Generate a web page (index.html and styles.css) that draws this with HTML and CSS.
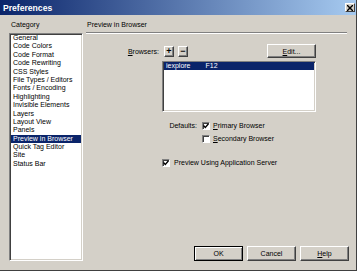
FILE: index.html
```html
<!DOCTYPE html>
<html lang="en">
<head>
    <meta charset="UTF-8">
    <title>Preferences</title>
    <link rel="stylesheet" href="styles.css">
</head>
<body>
    <div class="window">
        <div class="titlebar">
            <span class="title">Preferences</span>
            <span class="close">
                <svg width="6" height="6" viewBox="0 0 6 6"><path d="M0 0 L6 6 M6 0 L0 6" stroke="#000" stroke-width="1.4"/></svg>
            </span>
        </div>

        <div class="main">
            <!-- Category list -->
            <div class="left">
                <div class="label cat-label">Category</div>
                <ul class="listbox categories">
                    <li>General</li>
                    <li>Code Colors</li>
                    <li>Code Format</li>
                    <li>Code Rewriting</li>
                    <li>CSS Styles</li>
                    <li>File Types / Editors</li>
                    <li>Fonts / Encoding</li>
                    <li>Highlighting</li>
                    <li>Invisible Elements</li>
                    <li>Layers</li>
                    <li>Layout View</li>
                    <li>Panels</li>
                    <li class="selected">Preview in Browser</li>
                    <li>Quick Tag Editor</li>
                    <li>Site</li>
                    <li>Status Bar</li>
                </ul>
            </div>

            <!-- Panel -->
            <div class="right">
                <div class="label panel-title">Preview in Browser</div>
                <div class="groove"></div>

                <div class="browsers-row">
                    <span class="row-label browsers-label"><u>B</u>rowsers:</span>
                    <button class="btn small">+</button>
                    <button class="btn small minus">&minus;</button>
                    <button class="btn edit"><u>E</u>dit...</button>
                </div>

                <ul class="listbox browsers">
                    <li class="selected"><span>iexplore</span><span class="key">F12</span></li>
                </ul>

                <div class="check-row defaults">
                    <span class="row-label defaults-label">Defaults:</span>
                    <span class="checkbox checked"><svg width="6" height="6" viewBox="0 0 6 6"><path d="M0.5 2.5 L2.3 4.5 L5.5 0.8" stroke="#000" stroke-width="1.3" fill="none"/></svg></span>
                    <span class="check-text"><u>P</u>rimary Browser</span>
                </div>
                <div class="check-row secondary">
                    <span class="checkbox"></span>
                    <span class="check-text"><u>S</u>econdary Browser</span>
                </div>
                <div class="check-row app-server">
                    <span class="checkbox checked"><svg width="6" height="6" viewBox="0 0 6 6"><path d="M0.5 2.5 L2.3 4.5 L5.5 0.8" stroke="#000" stroke-width="1.3" fill="none"/></svg></span>
                    <span class="check-text">Preview Using Application Server</span>
                </div>

                <div class="buttons">
                    <button class="btn dlg default">OK</button>
                    <button class="btn dlg">Cancel</button>
                    <button class="btn dlg"><u>H</u>elp</button>
                </div>
            </div>
        </div>
    </div>
</body>
</html>
```

FILE: styles.css
```css
body {
    margin: 0;
    font-family: "Liberation Sans", Arial, sans-serif;
    font-size: 7px;
    color: #000;
}

.window {
    width: 357px;
    height: 271px;
    box-sizing: border-box;
    background-color: #d4d0c8;
    border-right: 1px solid #404040;
    border-bottom: 1px solid #404040;
    display: flex;
    flex-direction: column;
}

/* Title bar */
.titlebar {
    height: 15px;
    display: flex;
    align-items: center;
    background: linear-gradient(to right, #0a246a, #a6caf0);
    padding: 0 1px 0 3px;
}

.title {
    flex: 1;
    color: white;
    font-weight: bold;
    font-size: 8.6px;
}

.close {
    width: 10px;
    height: 9px;
    box-sizing: border-box;
    background-color: #d4d0c8;
    border: 1px solid;
    border-color: #fff #404040 #404040 #fff;
    display: flex;
    align-items: center;
    justify-content: center;
}

/* Main area */
.main {
    flex: 1;
    display: flex;
    gap: 3px;
    padding: 6px 7px 9px 9px;
    min-height: 0;
}

.label {
    height: 8px;
    line-height: 8px;
    white-space: nowrap;
}

.left {
    width: 74px;
    display: flex;
    flex-direction: column;
}

.cat-label {
    padding-left: 2px;
}

.listbox {
    list-style: none;
    margin: 0;
    padding: 0;
    background: white;
    border: 1px solid;
    border-color: #808080 #fff #fff #808080;
    box-shadow: inset 1px 1px 0 #404040, inset -1px -1px 0 #d4d0c8;
    box-sizing: border-box;
}

.categories {
    flex: 1;
    margin-top: 4px;
    padding: 0 1px 0 1px;
}

.categories li {
    height: 8.4px;
    line-height: 8.4px;
    padding-left: 2px;
    white-space: nowrap;
}

.listbox li.selected {
    background-color: #0a246a;
    color: white;
}

/* Panel */
.right {
    flex: 1;
    display: flex;
    flex-direction: column;
}

.panel-title {
    padding-left: 1px;
}

.groove {
    margin-top: 3px;
    margin-right: 2px;
    height: 1px;
    background-color: #808080;
    border-bottom: 1px solid #fff;
}

.row-label {
    text-align: right;
    flex-shrink: 0;
    white-space: nowrap;
}

.browsers-row {
    margin-top: 10px;
    width: 230px;
    height: 14px;
    display: flex;
    align-items: center;
}

.browsers-label {
    width: 73px;
}

.btn {
    font-family: inherit;
    font-size: 7px;
    color: #000;
    background-color: #d4d0c8;
    border: 1px solid;
    border-color: #fff #404040 #404040 #fff;
    box-shadow: inset -1px -1px 0 #808080;
    padding: 0;
    margin: 0;
    box-sizing: border-box;
    display: flex;
    align-items: center;
    justify-content: center;
}

.small {
    width: 10px;
    height: 11px;
    margin-left: 5px;
    font-weight: bold;
    font-size: 9px;
    line-height: 9px;
}

.small.minus {
    margin-left: 4px;
}

.edit {
    margin-left: auto;
    width: 49px;
    height: 14px;
}

.browsers {
    margin-top: 3px;
    margin-left: 76px;
    width: 154px;
    height: 51px;
    padding: 0 1px;
}

.browsers li {
    height: 8px;
    line-height: 8px;
    padding-left: 2px;
    display: flex;
}

.browsers .key {
    margin-left: 15px;
}

/* Checkboxes */
.check-row {
    display: flex;
    align-items: center;
    height: 8px;
    line-height: 8px;
    white-space: nowrap;
}

.defaults {
    margin-top: 10px;
}

.defaults-label {
    width: 111px;
    margin-right: 5px;
}

.secondary {
    margin-top: 5px;
    padding-left: 116px;
}

.app-server {
    margin-top: 16px;
    padding-left: 76px;
}

.checkbox {
    width: 8px;
    height: 8px;
    box-sizing: border-box;
    background: white;
    border: 1px solid;
    border-color: #808080 #fff #fff #808080;
    box-shadow: inset 1px 1px 0 #404040;
    display: flex;
    align-items: center;
    justify-content: center;
    flex-shrink: 0;
}

.check-text {
    margin-left: 4px;
}

.defaults .check-text,
.secondary .check-text {
    margin-left: 3px;
}

/* Dialog buttons */
.buttons {
    margin-top: auto;
    display: flex;
    justify-content: flex-end;
    gap: 4px;
}

.dlg {
    width: 49px;
    height: 15px;
}

.dlg.default {
    border: 1px solid #000;
    box-shadow: inset 1px 1px 0 #fff, inset -1px -1px 0 #808080;
}
```
